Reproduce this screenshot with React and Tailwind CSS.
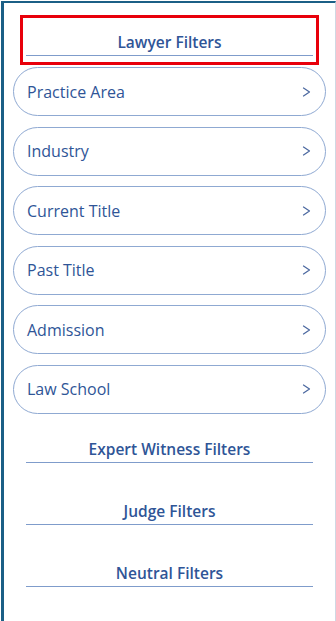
const lawyerFilters = ['Practice Area', 'Industry', 'Current Title', 'Past Title', 'Admission', 'Law School'];
const otherSections = ['Expert Witness Filters', 'Judge Filters', 'Neutral Filters'];

function SectionHeading({ label }) {
  return (
    <div className="border-b border-[#7f9ccb] pb-[3px] text-center text-[15.5px] font-semibold leading-[20px] text-[#2f5597]">
      {label}
    </div>
  );
}

function Chevron() {
  return (
    <svg width="9" height="10" viewBox="0 0 9 10" fill="none" className="shrink-0">
      <path d="M1.5 1 L7.5 5 L1.5 9" stroke="#4a679f" strokeWidth="1.2" strokeLinecap="round" strokeLinejoin="round" />
    </svg>
  );
}

export default function App() {
  return (
    <div className="w-[336px] h-[621px] bg-white pt-px pl-px" style={{ fontFamily: '"Open Sans", "Noto Sans", sans-serif' }}>
      <div className="flex h-full flex-col border-t-2 border-l-[3px] border-r border-t-[#1b5f86] border-l-[#1b5f86] border-r-[#cfd8e3]">
        {/* Active section, boxed */}
        <div className="mx-[16px] mt-[12px] border-[3px] border-[#e8000b] px-[3px] pt-[14px] pb-[6px]">
          <SectionHeading label="Lawyer Filters" />
        </div>

        <div className="mx-[9px] mt-[2px] flex flex-col gap-[10.5px]">
          {lawyerFilters.map((f) => (
            <button
              key={f}
              className="flex h-[49px] items-center justify-between rounded-full border border-[#8fa9d2] pl-[13px] pr-[14px] text-left text-[16px] text-[#2f5597]"
            >
              <span>{f}</span>
              <Chevron />
            </button>
          ))}
        </div>

        <div className="mx-[22px] mt-[25px] flex flex-col gap-[38px]">
          {otherSections.map((s) => (
            <SectionHeading key={s} label={s} />
          ))}
        </div>
      </div>
    </div>
  );
}
